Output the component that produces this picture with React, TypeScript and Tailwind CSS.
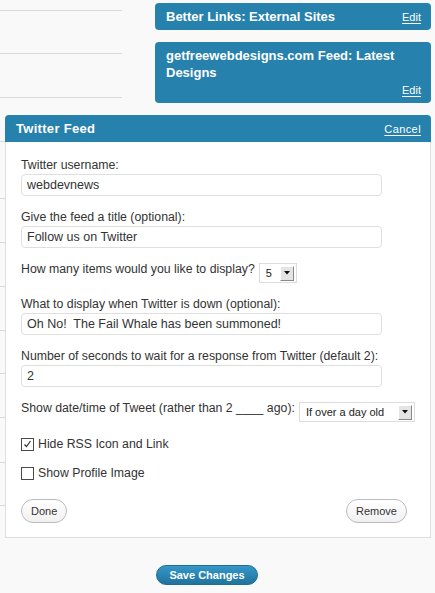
import React from 'react';

const font = { fontFamily: '"Liberation Sans", Arial, sans-serif' };

const Field: React.FC<{ label: string; value: string }> = ({ label, value }) => (
  <div className="mb-[13px]">
    <div className="text-[12.3px] leading-4 text-[#333] whitespace-nowrap">{label}</div>
    <div className="mt-[1px] w-[361px] h-[22px] rounded-[4px] border border-[#dfdfdf] bg-white px-[5px] text-[12.5px] leading-[20px] text-[#333] whitespace-pre">
      {value}
    </div>
  </div>
);

const FakeSelect: React.FC<{ value: string; width: string }> = ({ value, width }) => (
  <div className={`mt-[2px] h-[20px] shrink-0 ${width} flex items-center justify-between border border-[#dcdcdc] bg-white pl-[6px] pr-[2px] text-[11px] text-[#222]`}>
    <span className="whitespace-nowrap">{value}</span>
    <span className="w-[14px] h-[15px] flex items-center justify-center bg-[#e4e4e4] border-t border-l border-t-white border-l-white border-r border-b border-r-[#888] border-b-[#888]">
      <svg width="6" height="4" viewBox="0 0 6 4">
        <path d="M0 0h6L3 3.5z" fill="#111" />
      </svg>
    </span>
  </div>
);

const Check: React.FC<{ checked?: boolean; label: string }> = ({ checked, label }) => (
  <div className="flex items-center gap-[4px] h-4 text-[12.3px] leading-4 text-[#333]">
    <span className="w-[13px] h-[13px] border border-[#4a4a4a] bg-white flex items-center justify-center">
      {checked && (
        <svg width="9" height="8" viewBox="0 0 9 8">
          <path d="M1.5 4.5l2 2L7.5 1" stroke="#333" strokeWidth="1.2" fill="none" />
        </svg>
      )}
    </span>
    <span>{label}</span>
  </div>
);

export default function App() {
  return (
    <div className="relative w-[435px] h-[593px] bg-[#f9f9f9] overflow-hidden" style={font}>
      {/* widget list behind the open panel */}
      <div className="absolute left-0 top-0 w-[122px] flex flex-col">
        <div className="h-[11px] border-b border-[#dadada]" />
        <div className="h-[43px] border-b border-[#dadada]" />
        <div className="h-[44px] border-b border-[#dadada]" />
        <div className="h-[44px] border-b border-[#dadada]" />
        <div className="h-[57px] border-b border-[#dadada]" />
        <div className="h-[44px] border-b border-[#dadada]" />
        <div className="h-[44px] border-b border-[#dadada]" />
        <div className="h-[44px] border-b border-[#dadada]" />
        <div className="h-[43px] border-b border-[#dadada]" />
        <div className="h-[44px] border-b border-[#dadada]" />
        <div className="h-[45px] border-b border-[#dadada]" />
        <div className="h-[43px] border-b border-[#dadada]" />
      </div>

      <div className="relative flex flex-col pt-[3px]">
        <div className="ml-[155px] w-[276px] flex flex-col gap-[12px]">
          <div className="h-[27px] rounded-[4px] bg-[#2681ad] pl-[11px] pr-[10px] pt-[5px] flex items-baseline justify-between text-white">
            <span className="text-[13px] leading-[17px] font-bold">Better Links: External Sites</span>
            <span className="text-[11px] underline underline-offset-2">Edit</span>
          </div>
          <div className="h-[61px] rounded-[4px] bg-[#2681ad] pl-[11px] pr-[10px] pt-[5px] flex flex-col text-white">
            <span className="text-[13px] leading-[17px] font-bold">getfreewebdesigns.com Feed: Latest Designs</span>
            <span className="mt-[2px] self-end text-[11px] leading-[14px] underline underline-offset-2">Edit</span>
          </div>
        </div>

        <div className="mt-[12px] ml-[5px] w-[426px]">
          <div className="h-[27px] rounded-t-[4px] bg-[#2681ad] pl-[11px] pr-[10px] pt-[5px] flex items-baseline justify-between text-white">
            <span className="text-[13px] leading-[17px] font-bold tracking-[0.3px]">Twitter Feed</span>
            <span className="text-[11px] tracking-[0.4px] underline underline-offset-2">Cancel</span>
          </div>
          <div className="bg-white border border-t-0 border-[#dfdfdf] pl-[15px] pr-[4px] pt-[15px] pb-[14px]">
            <Field label="Twitter username:" value="webdevnews" />
            <Field label="Give the feed a title (optional):" value="Follow us on Twitter" />
            <div className="mb-[13px] flex items-start gap-[4px]">
              <span className="text-[12.3px] leading-4 text-[#333] whitespace-nowrap">How many items would you like to display?</span>
              <FakeSelect value="5" width="w-[38px]" />
            </div>
            <Field label="What to display when Twitter is down (optional):" value="Oh No!  The Fail Whale has been summoned!" />
            <Field label="Number of seconds to wait for a response from Twitter (default 2):" value="2" />
            <div className="mb-[14px] flex items-start gap-[4px]">
              <span className="text-[12.3px] leading-4 text-[#333] whitespace-nowrap">Show date/time of Tweet (rather than 2 ____ ago):</span>
              <FakeSelect value="If over a day old" width="w-[116px]" />
            </div>
            <div className="flex flex-col gap-[13px]">
              <Check checked label="Hide RSS Icon and Link" />
              <Check label="Show Profile Image" />
            </div>
            <div className="mt-[18px] pr-[19px] flex justify-between">
              <button className="h-[24px] px-[9px] rounded-full border border-[#bbb] bg-gradient-to-b from-white to-[#f0f0f0] text-[11px] text-[#333]">
                Done
              </button>
              <button className="h-[24px] px-[9px] rounded-full border border-[#bbb] bg-gradient-to-b from-white to-[#f0f0f0] text-[11px] text-[#333]">
                Remove
              </button>
            </div>
          </div>
        </div>

        <div className="mt-[24px] ml-[156px]">
          <button className="w-[102px] h-[20px] rounded-full border border-[#1f6e95] bg-gradient-to-b from-[#3597c9] to-[#20739c] text-white text-[11px] font-bold leading-[18px] text-center">
            Save Changes
          </button>
        </div>
      </div>
    </div>
  );
}
